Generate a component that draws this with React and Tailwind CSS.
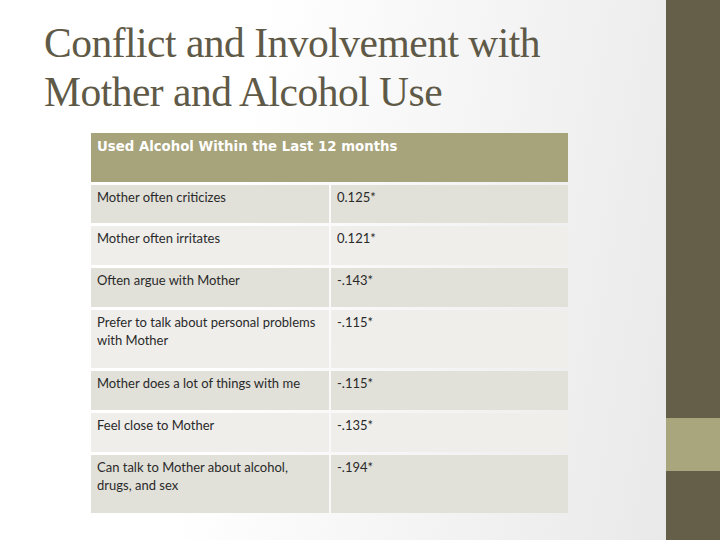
export default function App() {
  const rows = [
    ["Mother often criticizes", "0.125*", "h-[38px]"],
    ["Mother often irritates", "0.121*", "h-[39px]"],
    ["Often argue with Mother", "-.143*", "h-[39px]"],
    ["Prefer to talk about personal problems with Mother", "-.115*", "h-[58px]"],
    ["Mother does a lot of things with me", "-.115*", "h-[39px]"],
    ["Feel close to Mother", "-.135*", "h-[39px]"],
    ["Can talk to Mother about alcohol, drugs, and sex", "-.194*", "h-[58px]"],
  ];
  return (
    <div className="w-[720px] h-[540px] flex overflow-hidden">
      <div className="w-[666px] h-full bg-[linear-gradient(100deg,#ffffff_35%,#e9e9e9_100%)] flex flex-col">
        <h1 className="ml-[44px] mt-[19px] text-[41.5px] leading-[49px] text-[#5f5a47] font-['Liberation_Serif',serif] tracking-[-0.5px]">
          Conflict and Involvement with
          <br />
          Mother and Alcohol Use
        </h1>
        <div className="ml-[91px] mt-[16px] w-[477px] flex flex-col gap-[3px] font-['Lato',sans-serif]">
          <div className="h-[49px] bg-[#a7a37b] px-[6px] pt-[5px] text-white font-bold text-[13.3px] leading-[18px] font-['DejaVu_Sans',sans-serif]">
            Used Alcohol Within the Last 12 months
          </div>
          {rows.map(([a, b, h], i) => (
            <div key={i} className={`${h} grid grid-cols-[238px_1fr] gap-[2px]`}>
              <div className={`${i % 2 === 0 ? "bg-[#e1e0d9]" : "bg-[#efeeea]"} px-[6px] pt-[3px] text-[13px] leading-[18px] text-[#2a2a2a]`}>
                {a}
              </div>
              <div className={`${i % 2 === 0 ? "bg-[#e1e0d9]" : "bg-[#efeeea]"} px-[6px] pt-[3px] text-[13px] leading-[18px] text-[#2a2a2a]`}>
                {b}
              </div>
            </div>
          ))}
        </div>
      </div>
      <div className="flex-1 h-full flex flex-col bg-[#655e48]">
        <div className="h-[418px]" />
        <div className="h-[53px] bg-[#a9a57d]" />
      </div>
    </div>
  );
}
